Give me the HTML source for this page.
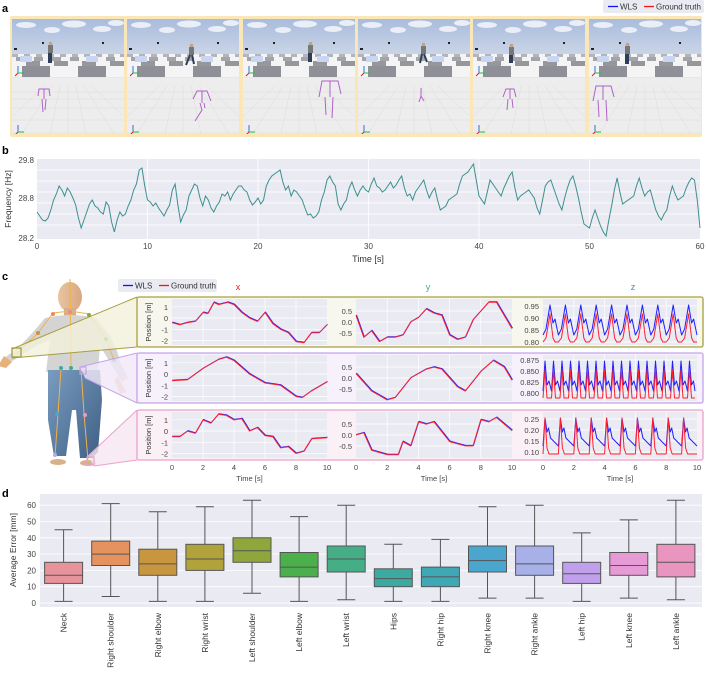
<!DOCTYPE html>
<html><head><meta charset="utf-8"><style>
html,body{margin:0;padding:0;background:#fff;}
svg{display:block;font-family:"Liberation Sans",sans-serif;}
</style></head><body>
<svg width="706" height="673" viewBox="0 0 706 673" xmlns="http://www.w3.org/2000/svg" xmlns:xlink="http://www.w3.org/1999/xlink">
<defs>
<linearGradient id="sky" x1="0" y1="0" x2="0" y2="1"><stop offset="0" stop-color="#a9bcdc"/><stop offset="1" stop-color="#dfe5ee"/></linearGradient>
<linearGradient id="skin" x1="0" y1="0" x2="1" y2="0"><stop offset="0" stop-color="#e8c4a0"/><stop offset="1" stop-color="#d9a880"/></linearGradient>
<linearGradient id="jeans" x1="0" y1="0" x2="1" y2="1"><stop offset="0" stop-color="#7a9cc0"/><stop offset="1" stop-color="#3f5f85"/></linearGradient>
<pattern id="c1" patternUnits="userSpaceOnUse" width="12" height="4"><rect width="6" height="4" fill="#b4b5ba"/></pattern>
<pattern id="c2" patternUnits="userSpaceOnUse" x="4" width="18" height="5"><rect width="9" height="5" fill="#a4a5ab"/></pattern>
<pattern id="c3" patternUnits="userSpaceOnUse" x="0" width="28" height="6"><rect x="14" width="14" height="6" fill="#96979d"/></pattern>
<pattern id="c4" patternUnits="userSpaceOnUse" x="10" width="56" height="12"><rect width="28" height="12" fill="#8f9097"/></pattern>
<clipPath id="fc"><rect x="0" y="19" width="112" height="115"/></clipPath>
<g id="fr" clip-path="url(#fc)">
<rect x="0" y="19" width="112" height="58" fill="url(#sky)"/>
<ellipse cx="14" cy="25" rx="10" ry="3" fill="#f4f6fa" opacity="0.85"/><ellipse cx="40" cy="30" rx="8" ry="3" fill="#f4f6fa" opacity="0.85"/><ellipse cx="62" cy="24" rx="12" ry="3.5" fill="#f4f6fa" opacity="0.85"/><ellipse cx="90" cy="29" rx="9" ry="3" fill="#f4f6fa" opacity="0.85"/><ellipse cx="104" cy="23" rx="8" ry="3" fill="#f4f6fa" opacity="0.85"/>
<rect x="0" y="54" width="112" height="23" fill="#f4f4f4"/>
<rect x="0" y="54" width="112" height="3" fill="url(#c1)"/>
<rect x="0" y="57" width="112" height="4" fill="url(#c2)"/>
<rect x="0" y="61" width="112" height="5" fill="url(#c3)"/>
<rect x="0" y="66" width="112" height="11" fill="url(#c4)"/>
<rect x="8" y="56" width="12" height="6" fill="#c9d6f2"/><rect x="74" y="56" width="12" height="6" fill="#c9d6f2"/>
<rect x="2" y="48" width="3" height="2" fill="#222"/><rect x="30" y="42" width="2" height="2" fill="#222"/><rect x="90" y="42" width="2" height="2" fill="#222"/>
<rect x="0" y="78" width="112" height="56" fill="#ededed"/>
<g stroke="#dcdcdc" stroke-width="0.5"><path d="M0 92H112M0 99H112M0 108H112M0 120H112M0 133H112M40 86L10 134M48 86L38 134M56 86L56 134M64 86L74 134M72 86L102 134M32 86L-18 134M80 86L130 134"/></g>
<g stroke-width="1"><path d="M6 73V66M6 132V125" stroke="#3070e0"/><path d="M6 73H12M6 132H12" stroke="#20c040"/><path d="M6 73L3 76M6 132L3 135" stroke="#e02020"/></g>
</g>
</defs>
<text x="2" y="12" font-size="11" font-weight="bold">a</text>
<text x="2" y="154" font-size="11" font-weight="bold">b</text>
<text x="2" y="280" font-size="11" font-weight="bold">c</text>
<text x="2" y="497" font-size="11" font-weight="bold">d</text>
<rect x="603" y="0" width="101" height="13" rx="2" fill="#eaeaf2"/>
<line x1="608" y1="6.5" x2="618" y2="6.5" stroke="#1010ff" stroke-width="1.3"/>
<text x="620" y="9.5" font-size="8" fill="#333">WLS</text>
<line x1="644" y1="6.5" x2="654" y2="6.5" stroke="#ff1010" stroke-width="1.3"/>
<text x="656" y="9.5" font-size="8" fill="#333">Ground truth</text>
<!-- panel a -->
<rect x="10" y="16" width="692" height="121" rx="2" fill="#fbe6b8"/>
<use xlink:href="#fr" href="#fr" x="12"/>
<use xlink:href="#fr" href="#fr" x="127"/>
<use xlink:href="#fr" href="#fr" x="243"/>
<use xlink:href="#fr" href="#fr" x="358"/>
<use xlink:href="#fr" href="#fr" x="473"/>
<use xlink:href="#fr" href="#fr" x="589"/>
<g>
<rect x="48" y="45" width="5" height="8" fill="#777"/><rect x="48" y="53" width="4" height="10" fill="#2c3e5a"/><circle cx="50.5" cy="43.5" r="1.8" fill="#c8a080"/>
<rect x="189" y="47" width="5" height="8" fill="#777"/><path d="M190 55L186 65M192 55L194 64" stroke="#2c3e5a" stroke-width="2"/><circle cx="191.5" cy="45.5" r="1.8" fill="#c8a080"/>
<rect x="308" y="45" width="5" height="8" fill="#777"/><rect x="308" y="53" width="4" height="9" fill="#2c3e5a"/><circle cx="310.5" cy="43.5" r="1.8" fill="#c8a080"/>
<rect x="421" y="46" width="5" height="8" fill="#777"/><path d="M422 54L420 63M424 54L427 62" stroke="#2c3e5a" stroke-width="2"/><circle cx="423.5" cy="44.5" r="1.8" fill="#c8a080"/>
<rect x="509" y="47" width="5" height="8" fill="#777"/><rect x="509" y="55" width="4" height="8" fill="#2c3e5a"/><circle cx="511.5" cy="45.5" r="1.8" fill="#c8a080"/>
<rect x="625" y="46" width="5" height="8" fill="#777"/><rect x="625" y="54" width="4" height="10" fill="#2c3e5a"/><circle cx="627.5" cy="44.5" r="1.8" fill="#c8a080"/>
</g>
<g stroke="#b060c8" stroke-width="1" fill="none">
<path d="M38 96L39 89L49 89L50 96M44 89V99M42 99L43 112M46 99L45 110"/>
<path d="M193 99L197 91L207 91L211 101M202 91V103M200 103L202 110L195 121M204 103L205 108"/>
<path d="M319 97L322 81L338 81L341 94M330 81V97M325 97L326 115M333 97L332 118"/>
<path d="M421 88V96M421 96L419 102M421 96L424 101"/>
<path d="M503 97L506 89L514 89L516 97M510 89V99M508 99L507 110M512 99L513 108"/>
<path d="M593 101L596 86L611 86L614 97M603 86V100M598 100L599 117M606 100L607 121"/>
</g>
<!-- panel b -->
<rect x="37" y="159" width="663" height="80" fill="#eaeaf2"/>
<g stroke="#fff" stroke-width="0.8"><path d="M37 170H700M37 181H700M37 192H700M37 203H700M37 214H700M37 225H700M147.5 159V239M258 159V239M368.5 159V239M479 159V239M589.5 159V239"/></g>
<g transform="translate(37,0) scale(11.05,1)">
<polyline fill="none" stroke="#3d8f8f" stroke-width="1" vector-effect="non-scaling-stroke" points="0,212 0.25,216 0.5,220 0.75,221 1,218 1.25,210 1.5,200 1.75,194 2,186 2.25,190 2.5,196 2.75,188 3,192 3.25,198 3.5,205 3.75,218 4,228 4.25,220 4.5,212 4.75,204 5,200 5.25,206 5.5,208 5.75,212 6,214 6.25,202 6.5,206 6.75,222 7,232 7.25,220 7.5,212 7.75,216 8,214 8.25,206 8.5,200 8.75,190 9,184 9.25,170 9.5,168 9.75,186 10,200 10.25,202 10.5,206 10.75,203 11,208 11.25,212 11.5,216 11.75,210 12,205 12.25,190 12.5,184 12.75,205 13,222 13.25,215 13.5,210 13.75,196 14,190 14.25,184 14.5,186 14.75,198 15,206 15.25,196 15.5,200 15.75,208 16,212 16.25,206 16.5,202 16.75,194 17,196 17.25,192 17.5,200 17.75,194 18,190 18.25,186 18.5,186 18.75,190 19,192 19.25,200 19.5,205 19.75,202 20,198 20.25,204 20.5,200 20.75,186 21,180 21.25,176 21.5,174 21.75,172 22,170 22.25,182 22.5,190 22.75,186 23,196 23.25,190 23.5,192 23.75,196 24,200 24.25,208 24.5,215 24.75,214 25,218 25.25,216 25.5,212 25.75,200 26,192 26.25,180 26.5,176 26.75,182 27,186 27.25,204 27.5,210 27.75,204 28,200 28.25,188 28.5,182 28.75,190 29,196 29.25,190 29.5,186 29.75,190 30,192 30.25,184 30.5,178 30.75,186 31,188 31.25,192 31.5,190 31.75,186 32,182 32.25,188 32.5,185 32.75,180 33,176 33.25,188 33.5,196 33.75,194 34,200 34.25,192 34.5,188 34.75,184 35,180 35.25,190 35.5,198 35.75,192 36,188 36.25,200 36.5,210 36.75,208 37,206 37.25,200 37.5,198 37.75,196 38,194 38.25,184 38.5,176 38.75,174 39,172 39.25,168 39.5,164 39.75,180 40,196 40.25,200 40.5,204 40.75,192 41,180 41.25,184 41.5,188 41.75,192 42,196 42.25,188 42.5,182 42.75,176 43,172 43.25,188 43.5,200 43.75,196 44,194 44.25,192 44.5,190 44.75,194 45,198 45.25,208 45.5,214 45.75,200 46,186 46.25,182 46.5,180 46.75,188 47,196 47.25,204 47.5,210 47.75,198 48,188 48.25,180 48.5,176 48.75,186 49,198 49.25,212 49.5,224 49.75,226 50,228 50.25,218 50.5,210 50.75,218 51,226 51.25,232 51.5,236 51.75,220 52,206 52.25,190 52.5,178 52.75,192 53,204 53.25,202 53.5,200 53.75,198 54,196 54.25,186 54.5,178 54.75,188 55,196 55.25,192 55.5,190 55.75,200 56,210 56.25,216 56.5,220 56.75,214 57,210 57.25,196 57.5,186 57.75,194 58,200 58.25,198 58.5,196 58.75,188 59,182 59.25,178 59.5,180 59.75,200 60,228"/>
</g>
<g font-size="8" fill="#444">
<text x="34" y="163" text-anchor="end">29.8</text>
<text x="34" y="201" text-anchor="end">28.8</text>
<text x="34" y="241" text-anchor="end">28.2</text>
<text x="37" y="249" text-anchor="middle">0</text><text x="147.5" y="249" text-anchor="middle">10</text><text x="258" y="249" text-anchor="middle">20</text><text x="368.5" y="249" text-anchor="middle">30</text><text x="479" y="249" text-anchor="middle">40</text><text x="589.5" y="249" text-anchor="middle">50</text><text x="700" y="249" text-anchor="middle">60</text>
<text x="368" y="262" text-anchor="middle" font-size="9" fill="#333">Time [s]</text>
<text transform="translate(11,199) rotate(-90)" text-anchor="middle" font-size="8.5" fill="#333">Frequency [Hz]</text>
</g>
<!-- panel c human -->
<g>
<ellipse cx="70" cy="297" rx="12" ry="15" fill="url(#skin)"/>
<rect x="64" y="308" width="12" height="10" fill="#d9ad88"/>
<path d="M45 318 Q70 312 96 318 L110 336 Q118 350 120 362 L128 378 L122 382 L110 362 L100 346 L98 370 L100 372 L46 372 L50 340 Q34 346 20 356 L8 364 L4 358 L18 348 Q32 334 45 318Z" fill="#d4d4d4"/>
<path d="M4 356 L-2 366 L6 368 L12 362Z" fill="#e8b07a"/>
<path d="M118 376 L126 392 L120 394 L114 380Z" fill="#e8c4a0"/>
<path d="M48 370 L100 370 L102 400 L98 452 L92 458 L80 458 L76 410 L72 410 L66 456 L54 456 L48 420Z" fill="url(#jeans)"/>
<ellipse cx="58" cy="462" rx="8" ry="3" fill="#d8b08c"/>
<ellipse cx="88" cy="463" rx="8" ry="3" fill="#d8b08c"/>
<path d="M70 279 L71 368 M53 313 L70 311 L89 314 L106 340 L114 360 M53 313 L38 333 L15 355 M61 368 L58 414 L55 456 M81 368 L84 414 L88 460" stroke="#f2b24a" stroke-width="1" fill="none"/>
<circle cx="53" cy="314" r="2" fill="#e98a5e"/><circle cx="70" cy="312" r="2" fill="#e98a8a"/><circle cx="89" cy="315" r="2" fill="#8fa63c"/>
<circle cx="38" cy="333" r="2" fill="#c8963f"/><circle cx="106" cy="339" r="2" fill="#4bb04b"/><circle cx="114" cy="360" r="2" fill="#45ae86"/>
<circle cx="61" cy="368" r="2" fill="#3caaa0"/><circle cx="71" cy="368" r="2" fill="#3caaa0"/><circle cx="82" cy="369" r="2" fill="#c0a0ec"/>
<circle cx="57" cy="414" r="2" fill="#4aa6cf"/><circle cx="85" cy="415" r="2" fill="#e69bd6"/><circle cx="55" cy="455" r="2" fill="#a8b0e8"/>
</g>
<path d="M12 349 L137 297 L137 347 L12 358Z" fill="#f3f1dc" opacity="0.8"/>
<path d="M12 349 L137 297 M12 358 L137 347" stroke="#a69f3e" stroke-width="1"/>
<rect x="12" y="348" width="9" height="9" fill="none" stroke="#a69f3e" stroke-width="1.3"/>
<path d="M80 367 L137 353 L137 403 L85 378Z" fill="#f1e9f8" opacity="0.8"/>
<path d="M80 367 L137 353 M85 378 L137 403" stroke="#c3a3ea" stroke-width="1"/>
<rect x="80" y="367" width="6" height="7" fill="none" stroke="#c3a3ea" stroke-width="1.2"/>
<path d="M88 456 L137 410 L137 460 L94 466Z" fill="#f8e6f0" opacity="0.8"/>
<path d="M88 456 L137 410 M94 466 L137 460" stroke="#e9a2cc" stroke-width="1"/>
<rect x="87" y="457" width="7" height="8" fill="none" stroke="#e9a2cc" stroke-width="1.2"/>
<rect x="137" y="297" width="566" height="50" rx="2" fill="#f8f7ee" stroke="#a69f3e" stroke-width="1.3"/>
<rect x="137" y="353" width="566" height="50" rx="2" fill="#f7f1fb" stroke="#c3a3ea" stroke-width="1.3"/>
<rect x="137" y="410" width="566" height="50" rx="2" fill="#fbf0f5" stroke="#e9a2cc" stroke-width="1.3"/>
<rect x="118" y="279" width="99" height="13" rx="2" fill="#eaeaf2"/>
<line x1="123" y1="285.5" x2="133" y2="285.5" stroke="#1010ff" stroke-width="1.3"/>
<text x="135" y="288.5" font-size="8" fill="#333">WLS</text>
<line x1="159" y1="285.5" x2="169" y2="285.5" stroke="#ff1010" stroke-width="1.3"/>
<text x="171" y="288.5" font-size="8" fill="#333">Ground truth</text>
<text x="238" y="290" font-size="9" fill="#e82020" text-anchor="middle">x</text>
<text x="428" y="290" font-size="9" fill="#3cb371" text-anchor="middle">y</text>
<text x="633" y="290" font-size="9" fill="#4a7fd0" text-anchor="middle">z</text>
<g fill="#eaeaf2">
<rect x="172" y="299" width="155" height="46"/><rect x="356" y="299" width="156" height="46"/><rect x="543" y="299" width="154" height="46"/>
<rect x="172" y="355" width="155" height="46"/><rect x="356" y="355" width="156" height="46"/><rect x="543" y="355" width="154" height="46"/>
<rect x="172" y="412" width="155" height="46"/><rect x="356" y="412" width="156" height="46"/><rect x="543" y="412" width="154" height="46"/>
</g>
<g stroke="#fff" stroke-width="0.7">
<path d="M203 299V345M234 299V345M265 299V345M296 299V345M203 355V401M234 355V401M265 355V401M296 355V401M203 412V458M234 412V458M265 412V458M296 412V458"/>
<path d="M387.2 299V345M418.4 299V345M449.6 299V345M480.8 299V345M387.2 355V401M418.4 355V401M449.6 355V401M480.8 355V401M387.2 412V458M418.4 412V458M449.6 412V458M480.8 412V458"/>
<path d="M573.8 299V345M604.6 299V345M635.4 299V345M666.2 299V345M573.8 355V401M604.6 355V401M635.4 355V401M666.2 355V401M573.8 412V458M604.6 412V458M635.4 412V458M666.2 412V458"/>
<path d="M172 306.8H327M172 318H327M172 329.3H327M172 340.5H327M172 362.8H327M172 374H327M172 385.3H327M172 396.5H327M172 419.8H327M172 431H327M172 442.3H327M172 453.5H327"/>
<path d="M356 311H512M356 322H512M356 333H512M356 367H512M356 378H512M356 389H512M356 424H512M356 435H512M356 446H512"/>
<path d="M543 306H697M543 318H697M543 330H697M543 342H697M543 360H697M543 371H697M543 382H697M543 393H697M543 419H697M543 430H697M543 441H697M543 452H697"/>
</g>
<g font-size="7.5" fill="#444" text-anchor="end">
<text x="168" y="309.8">1</text><text x="168" y="321">0</text><text x="168" y="332.3">-1</text><text x="168" y="343.5">-2</text>
<text x="168" y="365.8">1</text><text x="168" y="377">0</text><text x="168" y="388.3">-1</text><text x="168" y="399.5">-2</text>
<text x="168" y="422.8">1</text><text x="168" y="434">0</text><text x="168" y="445.3">-1</text><text x="168" y="456.5">-2</text>
<text x="352" y="314">0.5</text><text x="352" y="325">0.0</text><text x="352" y="336">-0.5</text>
<text x="352" y="370">0.5</text><text x="352" y="381">0.0</text><text x="352" y="392">-0.5</text>
<text x="352" y="427">0.5</text><text x="352" y="438">0.0</text><text x="352" y="449">-0.5</text>
<text x="539" y="309">0.95</text><text x="539" y="321">0.90</text><text x="539" y="333">0.85</text><text x="539" y="345">0.80</text>
<text x="539" y="363">0.875</text><text x="539" y="374">0.850</text><text x="539" y="385">0.825</text><text x="539" y="396">0.800</text>
<text x="539" y="422">0.25</text><text x="539" y="433">0.20</text><text x="539" y="444">0.15</text><text x="539" y="455">0.10</text>
</g>
<g font-size="7.5" fill="#333" text-anchor="middle">
<text transform="translate(151,322) rotate(-90)">Position [m]</text>
<text transform="translate(151,378) rotate(-90)">Position [m]</text>
<text transform="translate(151,435) rotate(-90)">Position [m]</text>
</g>
<g fill="none" stroke-width="1" stroke-linejoin="round">
<g stroke="#2020ff">
<polyline transform="translate(0.5,-0.5)" points="172,322.6 179.75,324.8 187.5,322.6 195.25,321.4 203,312.5 207.65,313.6 213.85,302.4 218.5,304.6 227.8,302.4 234,304.6 241.75,312.5 249.5,318.1 257.25,321.4 265,312.5 272.75,323.7 280.5,329.3 288.25,332.7 296,341.6 303.75,342.8 311.5,332.7 319.25,332.7 327,324.8"/>
<polyline transform="translate(0.5,-0.5)" points="172,380.8 187.5,379.7 203,368.5 218.5,359.5 226.25,357.2 234,360.6 249.5,374.1 265,383 280.5,385.3 296,396.5 302.2,397.6 311.5,390.9 327,381.9"/>
<polyline transform="translate(0.5,-0.5)" points="172,436.7 179.75,436.7 187.5,431.1 195.25,433.3 203,419.9 210.75,423.2 218.5,414.2 226.25,415.4 234,419.9 241.75,418.7 249.5,431.1 257.25,427.7 265,435.6 272.75,436.7 280.5,447.9 288.25,446.8 296,453.5 303.75,451.3 311.5,438.9 327,437.8"/>
<polyline transform="translate(0.5,-0.5)" points="356,315.4 363.8,337.3 371.6,330.8 379.4,341.7 387.2,337.3 395,337.3 402.8,335.1 410.6,322 418.4,317.6 426.2,308.9 434,313.2 441.8,315.4 449.6,335.1 457.4,339.5 465.2,337.3 473,319.8 480.8,311.1 488.6,302.3 496.4,302.3 512,328.6"/>
<polyline transform="translate(0.5,-0.5)" points="356,373.6 371.6,391.1 387.2,399.9 395,397.7 410.6,378 426.2,369.2 434,367.1 441.8,369.2 457.4,386.8 465.2,391.1 480.8,371.4 493.3,360.5 504.2,367.1 512,380.2"/>
<polyline transform="translate(0.5,-0.5)" points="356,435 363.8,432.8 371.6,450.3 379.4,452.5 387.2,454.7 398.1,454.7 402.8,441.6 410.6,445.9 418.4,421.9 426.2,424.1 434,421.9 449.6,441.6 457.4,443.8 465.2,445.9 473,445.9 480.8,419.7 488.6,421.9 496.4,417.5 512,430.6"/>
<path d="M543 335 l3 -6 l4 -24 l3 18 l2 -4 l3.4 16 l3 -6 l4 -24 l3 18 l2 -4 l3.4 16 l3 -6 l4 -24 l3 18 l2 -4 l3.4 16 l3 -6 l4 -24 l3 18 l2 -4 l3.4 16 l3 -6 l4 -24 l3 18 l2 -4 l3.4 16 l3 -6 l4 -24 l3 18 l2 -4 l3.4 16 l3 -6 l4 -24 l3 18 l2 -4 l3.4 16 l3 -6 l4 -24 l3 18 l2 -4 l3.4 16 l3 -6 l4 -24 l3 18 l2 -4 l3.4 16 l3 -6 l4 -24 l3 18 l2 -4 l3.4 16"/>
<path d="M543 391 l2 -30 l2 24 l2 -4 l2.5 10 l2 -30 l2 24 l2 -4 l2.5 10 l2 -30 l2 24 l2 -4 l2.5 10 l2 -30 l2 24 l2 -4 l2.5 10 l2 -30 l2 24 l2 -4 l2.5 10 l2 -30 l2 24 l2 -4 l2.5 10 l2 -30 l2 24 l2 -4 l2.5 10 l2 -30 l2 24 l2 -4 l2.5 10 l2 -30 l2 24 l2 -4 l2.5 10 l2 -30 l2 24 l2 -4 l2.5 10 l2 -30 l2 24 l2 -4 l2.5 10 l2 -30 l2 24 l2 -4 l2.5 10 l2 -30 l2 24 l2 -4 l2.5 10 l2 -30 l2 24 l2 -4 l2.5 10 l2 -30 l2 24 l2 -4 l2.5 10 l2 -30 l2 24 l2 -4 l2.5 10 l2 -30 l2 24 l2 -4 l2.5 10 l2 -30 l2 24 l2 -4 l1.5 10"/>
<path d="M543 446 l2 -28 l2 14 l1.5 -4 l2 10 l7.9 8 l2 -28 l2 14 l1.5 -4 l2 10 l7.9 8 l2 -28 l2 14 l1.5 -4 l2 10 l7.9 8 l2 -28 l2 14 l1.5 -4 l2 10 l7.9 8 l2 -28 l2 14 l1.5 -4 l2 10 l7.9 8 l2 -28 l2 14 l1.5 -4 l2 10 l7.9 8 l2 -28 l2 14 l1.5 -4 l2 10 l7.9 8 l2 -28 l2 14 l1.5 -4 l2 10 l7.9 8 l2 -28 l2 14 l1.5 -4 l2 10 l7.9 8 l2 -28 l2 14 l1.5 -4 l2 10 l7.9 8"/>
</g>
<g stroke="#ff2030">
<polyline points="172,322.6 179.75,324.8 187.5,322.6 195.25,321.4 203,312.5 207.65,313.6 213.85,302.4 218.5,304.6 227.8,302.4 234,304.6 241.75,312.5 249.5,318.1 257.25,321.4 265,312.5 272.75,323.7 280.5,329.3 288.25,332.7 296,341.6 303.75,342.8 311.5,332.7 319.25,332.7 327,324.8"/>
<polyline points="172,380.8 187.5,379.7 203,368.5 218.5,359.5 226.25,357.2 234,360.6 249.5,374.1 265,383 280.5,385.3 296,396.5 302.2,397.6 311.5,390.9 327,381.9"/>
<polyline points="172,436.7 179.75,436.7 187.5,431.1 195.25,433.3 203,419.9 210.75,423.2 218.5,414.2 226.25,415.4 234,419.9 241.75,418.7 249.5,431.1 257.25,427.7 265,435.6 272.75,436.7 280.5,447.9 288.25,446.8 296,453.5 303.75,451.3 311.5,438.9 327,437.8"/>
<polyline points="356,315.4 363.8,337.3 371.6,330.8 379.4,341.7 387.2,337.3 395,337.3 402.8,335.1 410.6,322 418.4,317.6 426.2,308.9 434,313.2 441.8,315.4 449.6,335.1 457.4,339.5 465.2,337.3 473,319.8 480.8,311.1 488.6,302.3 496.4,302.3 512,328.6"/>
<polyline points="356,373.6 371.6,391.1 387.2,399.9 395,397.7 410.6,378 426.2,369.2 434,367.1 441.8,369.2 457.4,386.8 465.2,391.1 480.8,371.4 493.3,360.5 504.2,367.1 512,380.2"/>
<polyline points="356,435 363.8,432.8 371.6,450.3 379.4,452.5 387.2,454.7 398.1,454.7 402.8,441.6 410.6,445.9 418.4,421.9 426.2,424.1 434,421.9 449.6,441.6 457.4,443.8 465.2,445.9 473,445.9 480.8,419.7 488.6,421.9 496.4,417.5 512,430.6"/>
<path d="M543 342 l3 -4 l4 -24 l3 24 l2 4 l3.4 0 l3 -4 l4 -24 l3 24 l2 4 l3.4 0 l3 -4 l4 -24 l3 24 l2 4 l3.4 0 l3 -4 l4 -24 l3 24 l2 4 l3.4 0 l3 -4 l4 -24 l3 24 l2 4 l3.4 0 l3 -4 l4 -24 l3 24 l2 4 l3.4 0 l3 -4 l4 -24 l3 24 l2 4 l3.4 0 l3 -4 l4 -24 l3 24 l2 4 l3.4 0 l3 -4 l4 -24 l3 24 l2 4 l3.4 0 l3 -4 l4 -24 l3 24 l2 4 l3.4 0"/>
<path d="M543 398 l2 -28 l2 28 l4.5 0 l2 -28 l2 28 l4.5 0 l2 -28 l2 28 l4.5 0 l2 -28 l2 28 l4.5 0 l2 -28 l2 28 l4.5 0 l2 -28 l2 28 l4.5 0 l2 -28 l2 28 l4.5 0 l2 -28 l2 28 l4.5 0 l2 -28 l2 28 l4.5 0 l2 -28 l2 28 l4.5 0 l2 -28 l2 28 l4.5 0 l2 -28 l2 28 l4.5 0 l2 -28 l2 28 l4.5 0 l2 -28 l2 28 l4.5 0 l2 -28 l2 28 l4.5 0 l2 -28 l2 28 l4.5 0 l2 -28 l2 28 l4.5 0 l2 -28 l2 28 l3.5 0"/>
<path d="M543 454 l2 -36 l2 30 l2 6 l9.4 0 l2 -36 l2 30 l2 6 l9.4 0 l2 -36 l2 30 l2 6 l9.4 0 l2 -36 l2 30 l2 6 l9.4 0 l2 -36 l2 30 l2 6 l9.4 0 l2 -36 l2 30 l2 6 l9.4 0 l2 -36 l2 30 l2 6 l9.4 0 l2 -36 l2 30 l2 6 l9.4 0 l2 -36 l2 30 l2 6 l9.4 0 l2 -36 l2 30 l2 6 l9.4 0"/>
</g>
</g>
<g font-size="7.5" fill="#444" text-anchor="middle">
<text x="172" y="470">0</text><text x="203" y="470">2</text><text x="234" y="470">4</text><text x="265" y="470">6</text><text x="296" y="470">8</text><text x="327" y="470">10</text>
<text x="356" y="470">0</text><text x="387.2" y="470">2</text><text x="418.4" y="470">4</text><text x="449.6" y="470">6</text><text x="480.8" y="470">8</text><text x="512" y="470">10</text>
<text x="543" y="470">0</text><text x="573.8" y="470">2</text><text x="604.6" y="470">4</text><text x="635.4" y="470">6</text><text x="666.2" y="470">8</text><text x="697" y="470">10</text>
<text x="249.5" y="481">Time [s]</text><text x="434" y="481">Time [s]</text><text x="620" y="481">Time [s]</text>
</g>
<!-- panel d -->
<rect x="40" y="494" width="662" height="113" fill="#eaeaf2"/>
<g stroke="#fff" stroke-width="0.8"><path d="M40 603H702M40 586.7H702M40 570.4H702M40 554.1H702M40 537.8H702M40 521.5H702M40 505.2H702"/></g>
<g font-size="8" fill="#444" text-anchor="end">
<text x="36" y="606">0</text><text x="36" y="589.7">10</text><text x="36" y="573.4">20</text><text x="36" y="557.1">30</text><text x="36" y="540.8">40</text><text x="36" y="524.5">50</text><text x="36" y="508.2">60</text>
</g>
<text transform="translate(16,550) rotate(-90)" text-anchor="middle" font-size="8.5" fill="#333">Average Error [mm]</text>
<g stroke="#555" stroke-width="1">
<path d="M63.6 601.4V529.7M54.6 601.4h18M54.6 529.7h18"/><rect x="44.6" y="562.3" width="38" height="21.1" fill="#e8939c"/><path d="M44.6 575.3h38"/>
<path d="M110.7 596.5V503.6M101.7 596.5h18M101.7 503.6h18"/><rect x="91.7" y="541.1" width="38" height="24.4" fill="#e6925e"/><path d="M91.7 554.1h38"/>
<path d="M157.8 601.4V511.7M148.8 601.4h18M148.8 511.7h18"/><rect x="138.8" y="549.2" width="38" height="26.1" fill="#c8963f"/><path d="M138.8 563.9h38"/>
<path d="M204.9 601.4V506.8M195.9 601.4h18M195.9 506.8h18"/><rect x="185.9" y="544.3" width="38" height="26.1" fill="#b2a23c"/><path d="M185.9 559h38"/>
<path d="M252 593.2V500.3M243 593.2h18M243 500.3h18"/><rect x="233" y="537.8" width="38" height="24.5" fill="#8fa63c"/><path d="M233 550.8h38"/>
<path d="M299.1 601.4V516.6M290.1 601.4h18M290.1 516.6h18"/><rect x="280.1" y="552.5" width="38" height="24.4" fill="#4bb04b"/><path d="M280.1 567.1h38"/>
<path d="M346.2 599.7V505.2M337.2 599.7h18M337.2 505.2h18"/><rect x="327.2" y="546" width="38" height="26" fill="#45ae86"/><path d="M327.2 559h38"/>
<path d="M393.3 601.4V544.3M384.3 601.4h18M384.3 544.3h18"/><rect x="374.3" y="568.8" width="38" height="17.9" fill="#3caaa0"/><path d="M374.3 578.6h38"/>
<path d="M440.4 601.4V539.4M431.4 601.4h18M431.4 539.4h18"/><rect x="421.4" y="567.1" width="38" height="19.6" fill="#40a8b4"/><path d="M421.4 576.9h38"/>
<path d="M487.5 598.1V506.8M478.5 598.1h18M478.5 506.8h18"/><rect x="468.5" y="546" width="38" height="26" fill="#4aa6cf"/><path d="M468.5 560.6h38"/>
<path d="M534.6 598.1V505.2M525.6 598.1h18M525.6 505.2h18"/><rect x="515.6" y="546" width="38" height="29.3" fill="#a8b0e8"/><path d="M515.6 563.9h38"/>
<path d="M581.7 601.4V532.9M572.7 601.4h18M572.7 532.9h18"/><rect x="562.7" y="562.3" width="38" height="21.1" fill="#c0a0ec"/><path d="M562.7 573.7h38"/>
<path d="M628.8 598.1V519.9M619.8 598.1h18M619.8 519.9h18"/><rect x="609.8" y="552.5" width="38" height="22.8" fill="#e69bd6"/><path d="M609.8 565.5h38"/>
<path d="M675.9 599.7V500.3M666.9 599.7h18M666.9 500.3h18"/><rect x="656.9" y="544.3" width="38" height="32.6" fill="#ea95c0"/><path d="M656.9 562.3h38"/>
</g>
<g font-size="8.5" fill="#333" text-anchor="end">
<text transform="translate(66.6,613) rotate(-90)">Neck</text>
<text transform="translate(113.7,613) rotate(-90)">Right shoulder</text>
<text transform="translate(160.8,613) rotate(-90)">Right elbow</text>
<text transform="translate(207.9,613) rotate(-90)">Right wrist</text>
<text transform="translate(255,613) rotate(-90)">Left shoulder</text>
<text transform="translate(302.1,613) rotate(-90)">Left elbow</text>
<text transform="translate(349.2,613) rotate(-90)">Left wrist</text>
<text transform="translate(396.3,613) rotate(-90)">Hips</text>
<text transform="translate(443.4,613) rotate(-90)">Right hip</text>
<text transform="translate(490.5,613) rotate(-90)">Right knee</text>
<text transform="translate(537.6,613) rotate(-90)">Right ankle</text>
<text transform="translate(584.7,613) rotate(-90)">Left hip</text>
<text transform="translate(631.8,613) rotate(-90)">Left knee</text>
<text transform="translate(678.9,613) rotate(-90)">Left ankle</text>
</g>
</svg>
</body></html>
